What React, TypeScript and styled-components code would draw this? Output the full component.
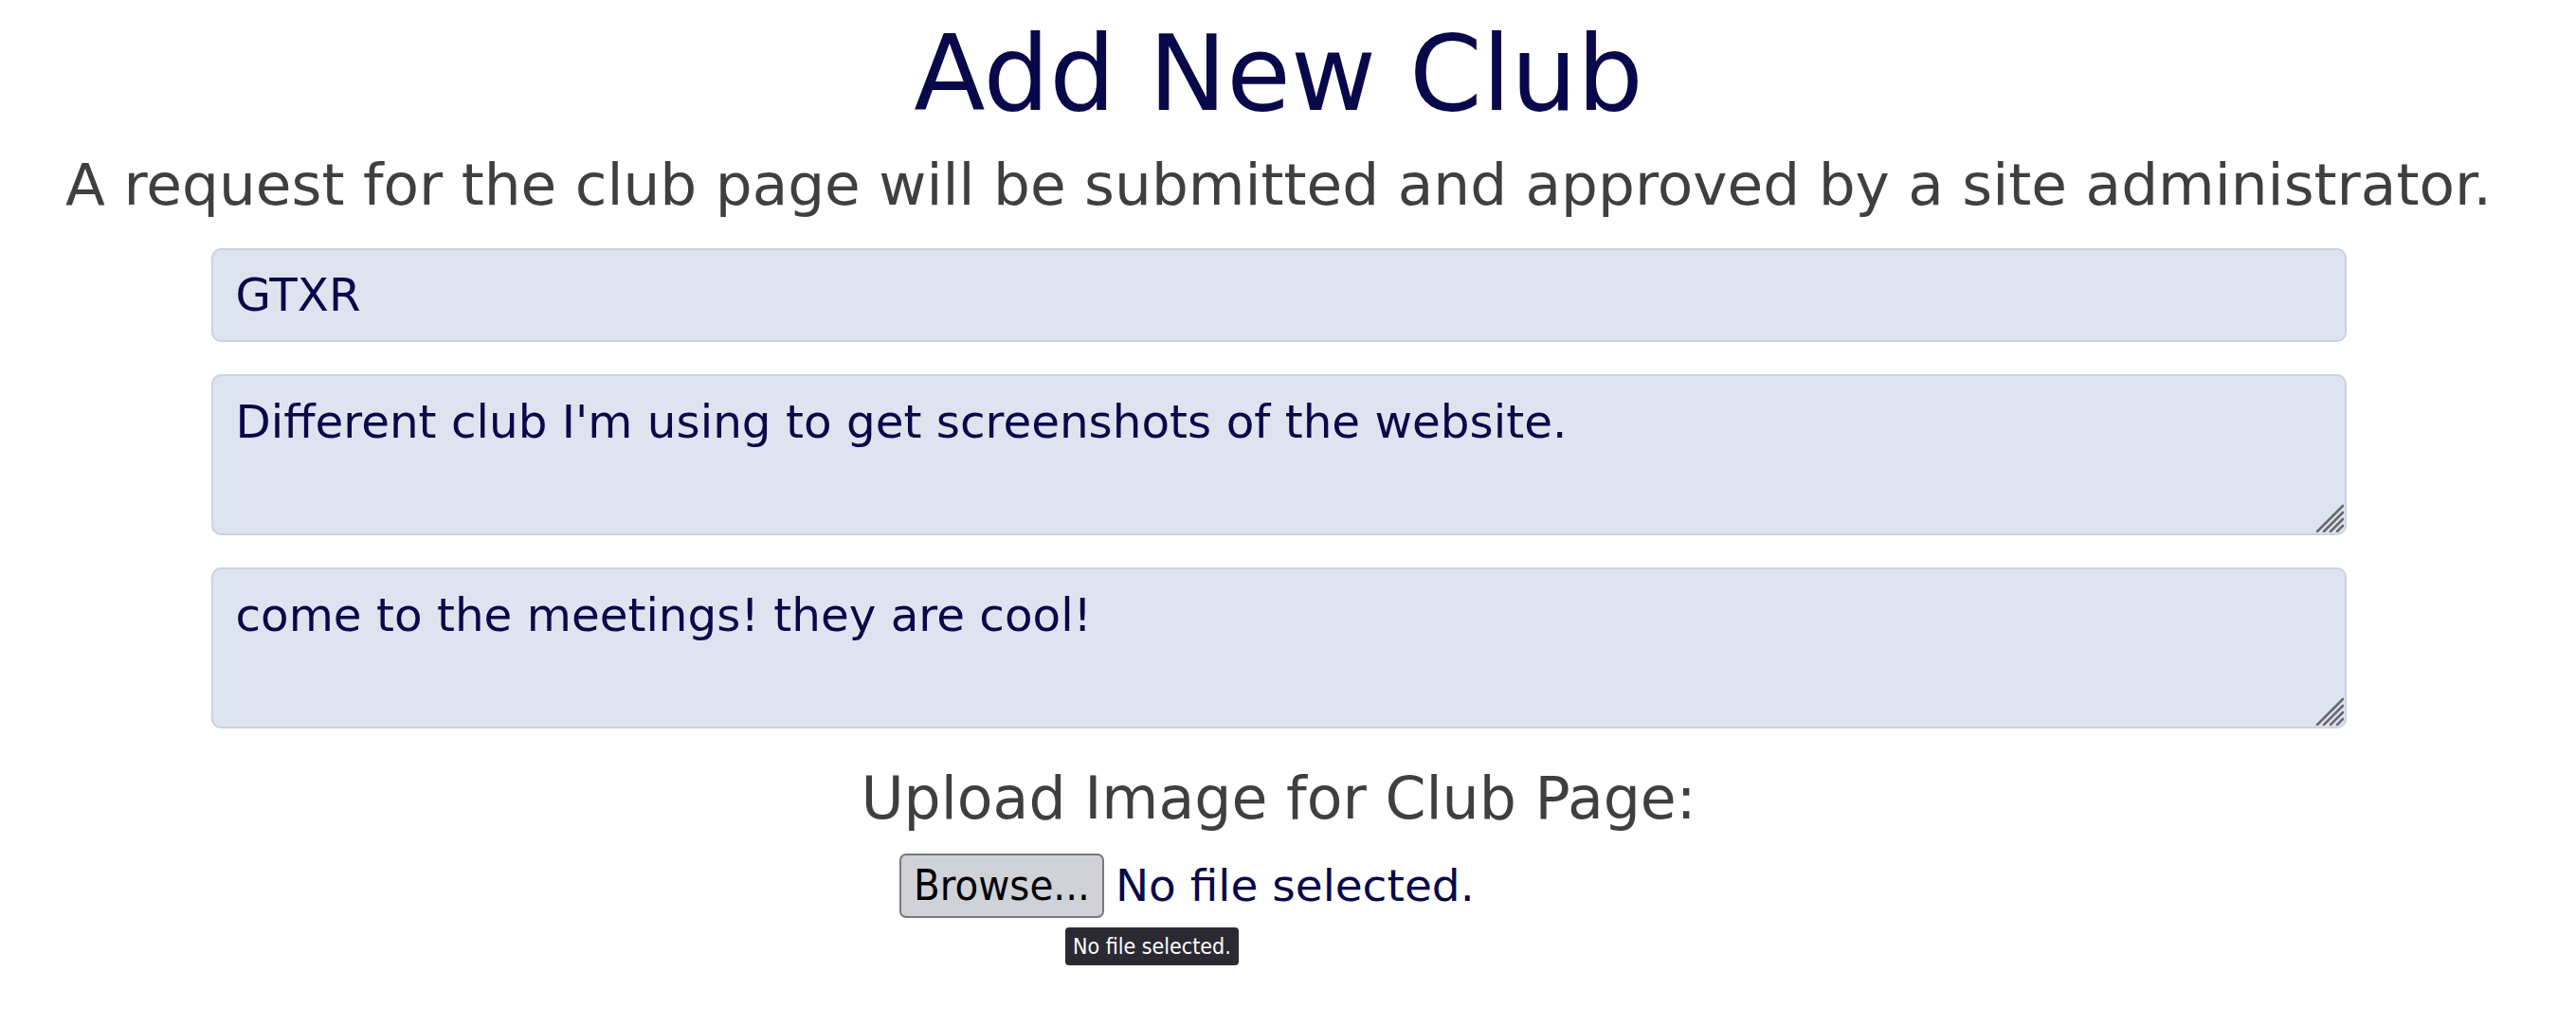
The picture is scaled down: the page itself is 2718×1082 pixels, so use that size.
import React from 'react';
import styled, { createGlobalStyle } from 'styled-components';

const GlobalStyle = createGlobalStyle`
  body {
    margin: 0;
    background: #ffffff;
    font-family: 'DejaVu Sans', 'Noto Sans', sans-serif;
  }
`;

const Page = styled.main`
  display: flex;
  flex-direction: column;
  align-items: center;
  padding: 12px 20px 0 0;
`;

const Title = styled.h1`
  margin: 0;
  font-size: 110px;
  font-weight: 400;
  line-height: 1.2;
  color: #08084a;
`;

const Subtitle = styled.h4`
  margin: 14px 0 0;
  font-size: 61.3px;
  font-weight: 400;
  line-height: 1.2;
  color: #3f3f3f;
`;

const Form = styled.form`
  display: flex;
  flex-direction: column;
  align-items: center;
  width: 2253px;
  gap: 34px;
  margin-top: 30px;
`;

const fieldBase = `
  box-sizing: border-box;
  width: 100%;
  background: #dee4ef;
  border: 2px solid #cbd2de;
  border-radius: 10px;
  color: #08084a;
  font-family: 'DejaVu Sans', 'Noto Sans', sans-serif;
  font-size: 48.4px;
  padding: 0 24px;
  outline: none;
`;

const TextInput = styled.input`
  ${fieldBase}
  height: 99px;
`;

const AreaWrap = styled.div`
  position: relative;
  width: 100%;
`;

const TextArea = styled.textarea`
  ${fieldBase}
  display: block;
  height: 170px;
  padding-top: 12px;
  line-height: 1.5;
  resize: none;
`;

const Grip = styled.svg`
  position: absolute;
  right: 3px;
  bottom: 3px;
  width: 30px;
  height: 30px;
`;

const UploadLabel = styled.label`
  margin-top: -31px;
  padding-top: 34px;
  font-size: 61.7px;
  color: #3f3f3f;
  line-height: 1.2;
`;

const FileBlock = styled.div`
  display: flex;
  flex-direction: column;
  align-items: flex-start;
  width: 800px;
  margin-top: -13px;
`;

const FileRow = styled.div`
  display: flex;
  align-items: center;
  gap: 12px;
`;

const BrowseButton = styled.button`
  box-sizing: border-box;
  height: 68px;
  padding: 0 13px;
  background: #d1d1d8;
  border: 2px solid #77777d;
  border-radius: 7px;
  color: #000;
  font-family: 'DejaVu Sans Condensed', 'DejaVu Sans', sans-serif;
  font-size: 45px;
  line-height: 1;
`;

const FileName = styled.span`
  font-size: 47px;
  color: #08084a;
`;

const Tooltip = styled.div`
  margin: 10px 0 0 175px;
  padding: 5px 8px;
  background: #2b2a33;
  border-radius: 4px;
  color: #fff;
  font-family: 'DejaVu Sans Condensed', 'DejaVu Sans', sans-serif;
  font-size: 23px;
  line-height: 30px;
  white-space: nowrap;
`;

function ResizeGrip() {
  return (
    <Grip viewBox="0 0 30 30">
      <g stroke="#68686d" strokeWidth="2.6" strokeLinecap="round">
        <line x1="2" y1="29" x2="29" y2="2" />
        <line x1="9" y1="29" x2="29" y2="9" />
        <line x1="16" y1="29" x2="29" y2="16" />
        <line x1="23" y1="29" x2="29" y2="23" />
      </g>
    </Grip>
  );
}

export default function App() {
  return (
    <>
      <GlobalStyle />
      <Page>
        <Title>Add New Club</Title>
        <Subtitle>A request for the club page will be submitted and approved by a site administrator.</Subtitle>
        <Form>
          <TextInput defaultValue="GTXR" />
          <AreaWrap>
            <TextArea defaultValue="Different club I'm using to get screenshots of the website." />
            <ResizeGrip />
          </AreaWrap>
          <AreaWrap>
            <TextArea defaultValue="come to the meetings! they are cool!" />
            <ResizeGrip />
          </AreaWrap>
          <UploadLabel>Upload Image for Club Page:</UploadLabel>
          <FileBlock>
            <FileRow>
              <BrowseButton type="button">Browse...</BrowseButton>
              <FileName>No file selected.</FileName>
            </FileRow>
            <Tooltip>No file selected.</Tooltip>
          </FileBlock>
        </Form>
      </Page>
    </>
  );
}
